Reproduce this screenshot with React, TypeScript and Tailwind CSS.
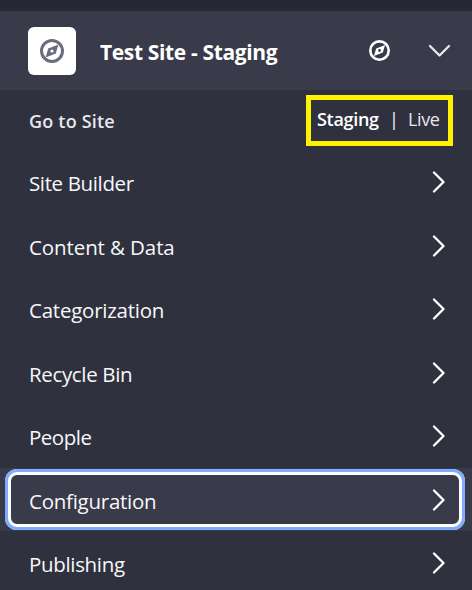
const items = [
  { label: 'Site Builder', tracking: 'tracking-[-0.37px]', height: 'h-[64px]' },
  { label: 'Content & Data', tracking: 'tracking-[-0.1px]', height: 'h-[63px]' },
  { label: 'Categorization', tracking: 'tracking-[-0.24px]', height: 'h-[64px]' },
  { label: 'Recycle Bin', tracking: 'tracking-[-0.35px]', height: 'h-[63px]' },
  { label: 'People', tracking: 'tracking-[-0.5px]', height: 'h-[64px]' },
  { label: 'Configuration', tracking: 'tracking-[-0.26px]', height: 'h-[63px]', focused: true },
  { label: 'Publishing', tracking: 'tracking-[-0.33px]', height: 'h-[63px]' },
];

function Compass({ className }: { className: string }) {
  return (
    <svg viewBox="0 0 24 24" className={className} fill="none">
      <circle cx="12" cy="12" r="10.5" stroke="currentColor" strokeWidth="3" />
      <path
        fillRule="evenodd"
        fill="currentColor"
        d="M18.4 5.6 15.8 14.4 5.6 18.4 8.2 9.6ZM12 10.4a1.6 1.6 0 1 0 0 3.2 1.6 1.6 0 0 0 0-3.2Z"
      />
    </svg>
  );
}

function ChevronRight() {
  return (
    <svg viewBox="0 0 14 22" className="h-[22px] w-[14px] shrink-0" fill="none">
      <path d="M2 1.5 11.5 11 2 20.5" stroke="white" strokeWidth="2.3" strokeLinecap="round" strokeLinejoin="round" />
    </svg>
  );
}

export default function App() {
  return (
    <div className="flex h-[590px] w-[472px] flex-col overflow-hidden bg-[#30313f] font-['Open_Sans','Noto_Sans',sans-serif] text-[#f7f8f9]">
      <div className="h-[11px] shrink-0 bg-[#272833]" />
      <header className="flex h-[79px] shrink-0 items-center bg-[#393a4a] pl-7 pr-[21px] text-white">
        <div className="mt-[1px] flex size-12 items-center justify-center rounded-md bg-white text-[#6b6c7e]">
          <Compass className="size-6" />
        </div>
        <h1 className="ml-6 mt-[3px] flex-1 whitespace-nowrap text-[21px] font-bold leading-7 tracking-[-0.36px]">Test Site - Staging</h1>
        <Compass className="size-[21px]" />
        <svg viewBox="0 0 23 14" className="ml-[38px] h-[14px] w-[23px]" fill="none">
          <path d="M2 2 11.5 11.5 21 2" stroke="#e7e7ed" strokeWidth="2.4" strokeLinecap="round" strokeLinejoin="round" />
        </svg>
      </header>
      <div className="flex h-[60px] shrink-0 items-start justify-between pl-[29px] pr-[19px] pt-[5px]">
        <span className="mt-[14px] text-[18px] font-semibold leading-6 tracking-[0.2px] text-[#e7e7ed]">Go to Site</span>
        <div className="flex h-[51px] w-[147px] items-start whitespace-nowrap border-[5px] border-[#fff200] pl-[6px] pt-[7px] text-[18px] leading-6">
          <span className="w-[72px] font-semibold tracking-[-0.3px] text-white">Staging</span>
          <span className="w-[19px]">|</span>
          <span className="tracking-[-0.4px] text-[#e7e7ed]">Live</span>
        </div>
      </div>
      <nav className="shrink-0">
        {items.map((item) => (
          <a key={item.label} className={`block px-[5px] pt-[1px] ${item.height} ${item.focused ? 'bg-[#393a4a]' : ''}`}>
            <div
              className={`mr-[2px] flex h-[61px] items-center justify-between rounded-xl pl-6 pr-[19px] ${
                item.focused ? 'shadow-[inset_0_0_0_3px_#80acff,inset_0_0_0_6px_white]' : ''
              }`}
            >
              <span className={`mt-[2px] whitespace-nowrap text-[20.5px] leading-7 ${item.tracking}`}>{item.label}</span>
              <ChevronRight />
            </div>
          </a>
        ))}
      </nav>
    </div>
  );
}
